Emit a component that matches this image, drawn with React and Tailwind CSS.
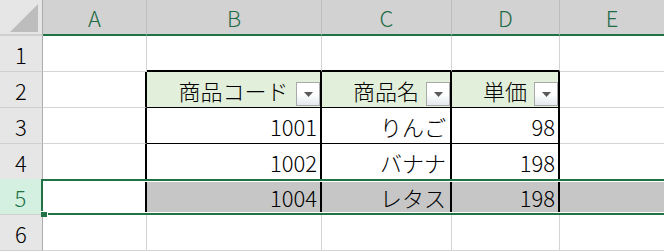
import React from "react";

const GRID = "border-[#d4d4d4]";

function DropBtn() {
  return (
    <div className="absolute right-0 bottom-[1px] w-[24px] h-[24px] border border-[#a9a9a9] bg-gradient-to-b from-white via-white to-[#e3e8ee] flex justify-center pt-[9px]">
      <svg width="9" height="5" viewBox="0 0 9 5">
        <path d="M0 0 L9 0 L4.5 5 Z" fill="#5a5a5a" />
      </svg>
    </div>
  );
}

function RowHead({ n }) {
  return (
    <div className="w-[43px] shrink-0 h-full bg-[#e6e6e6] border-r border-r-[#ababab] border-b border-b-[#d0d0d0] flex items-center justify-center text-black">
      {n}
    </div>
  );
}

function PlainRow({ n, bBottomBlack }) {
  const tb = bBottomBlack ? "border-b-2 border-b-black" : `border-b ${GRID}`;
  return (
    <div className="flex h-[36px]">
      <RowHead n={n} />
      <div className={`w-[104px] shrink-0 border-r border-b ${GRID}`} />
      <div className={`w-[175px] shrink-0 border-r ${GRID} ${tb}`} />
      <div className={`w-[130px] shrink-0 border-r ${GRID} ${tb}`} />
      <div className={`w-[108px] shrink-0 border-r ${GRID} ${tb}`} />
      <div className={`flex-1 border-b ${GRID}`} />
    </div>
  );
}

function DataRow({ n, code, name, price }) {
  return (
    <div className="flex h-[36px]">
      <RowHead n={n} />
      <div className={`w-[104px] shrink-0 border-b ${GRID} border-r-2 border-r-black`} />
      <div className="w-[175px] shrink-0 border-r-2 border-r-black border-b border-b-black flex items-center justify-end pr-[3px] text-[22px]">
        {code}
      </div>
      <div className="w-[130px] shrink-0 border-r-2 border-r-black border-b border-b-black flex items-center justify-end pr-[4px]">
        {name}
      </div>
      <div className="w-[108px] shrink-0 border-r-2 border-r-black border-b border-b-black flex items-center justify-end pr-[3px] text-[22px]">
        {price}
      </div>
      <div className={`flex-1 border-b ${GRID}`} />
    </div>
  );
}

export default function App() {
  return (
    <div className="w-[664px] h-[252px] overflow-hidden bg-white text-[22px] font-light leading-none text-black font-['Noto_Sans_CJK_JP','Noto_Sans',sans-serif]">
      {/* column headers */}
      <div className="flex h-[36px]">
        <div className="w-[43px] shrink-0 h-full bg-[#e6e6e6] border-r border-r-[#ababab] border-b-2 border-b-[#cfcfcf] flex items-end justify-end pr-[3px] pb-[1px]">
          <svg width="29" height="29" viewBox="0 0 29 29">
            <path d="M0 28 L28 28 L28 0 Z" fill="#bdbdbd" />
          </svg>
        </div>
        {[
          ["A", "w-[104px]"],
          ["B", "w-[175px]"],
          ["C", "w-[130px]"],
          ["D", "w-[108px]"],
        ].map(([l, w]) => (
          <div
            key={l}
            className={`${w} shrink-0 h-full bg-[#d2d2d2] border-r border-r-[#bcbcbc] border-b-2 border-b-[#217346] flex items-center justify-center text-[#1f6b45]`}
          >
            {l}
          </div>
        ))}
        <div className="flex-1 h-full bg-[#d2d2d2] border-r border-r-[#bcbcbc] border-b-2 border-b-[#217346] flex items-center justify-center text-[#1f6b45]">
          <span className="w-[104px] text-center">E</span>
        </div>
      </div>

      <PlainRow n="1" bBottomBlack />

      {/* row 2: table header */}
      <div className="flex h-[36px]">
        <RowHead n="2" />
        <div className={`w-[104px] shrink-0 border-b ${GRID} border-r-2 border-r-black`} />
        <div className="relative w-[175px] shrink-0 bg-[#e2efda] border-r-2 border-r-black border-b border-b-black flex items-center justify-center">
          商品コード
          <DropBtn />
        </div>
        <div className="relative w-[130px] shrink-0 bg-[#e2efda] border-r-2 border-r-black border-b border-b-black flex items-center justify-center">
          商品名
          <DropBtn />
        </div>
        <div className="relative w-[108px] shrink-0 bg-[#e2efda] border-r-2 border-r-black border-b border-b-black flex items-center justify-center">
          単価
          <DropBtn />
        </div>
        <div className={`flex-1 border-b ${GRID}`} />
      </div>

      <DataRow n="3" code="1001" name="りんご" price="98" />
      <DataRow n="4" code="1002" name="バナナ" price="198" />

      {/* row 5: selected */}
      <div className="flex h-[36px] -mt-px">
        <div className="w-[41px] shrink-0 h-full bg-[#d3f0e0] border-b border-b-[#d0d0d0] flex items-center justify-center text-[#217346]">
          5
        </div>
        <div className="relative flex-1 h-full border-t-2 border-b-2 border-l-2 border-[#217346] flex py-px bg-white">
          <div className="w-[104px] shrink-0 bg-white border-r-2 border-r-black" />
          <div className="w-[175px] shrink-0 bg-[#c6c6c6] border-r-2 border-r-black flex items-center justify-end pr-[3px] text-[22px]">
            1004
          </div>
          <div className="w-[130px] shrink-0 bg-[#c6c6c6] border-r-2 border-r-black flex items-center justify-end pr-[4px]">
            レタス
          </div>
          <div className="w-[108px] shrink-0 bg-[#c6c6c6] border-r-2 border-r-black flex items-center justify-end pr-[3px] text-[22px]">
            198
          </div>
          <div className="flex-1 bg-[#c6c6c6]" />
          <div className="absolute left-[-2px] bottom-[-4px] w-[7px] h-[6px] bg-[#217346] border-r border-t border-white" />
        </div>
      </div>

      <PlainRow n="6" />
    </div>
  );
}
